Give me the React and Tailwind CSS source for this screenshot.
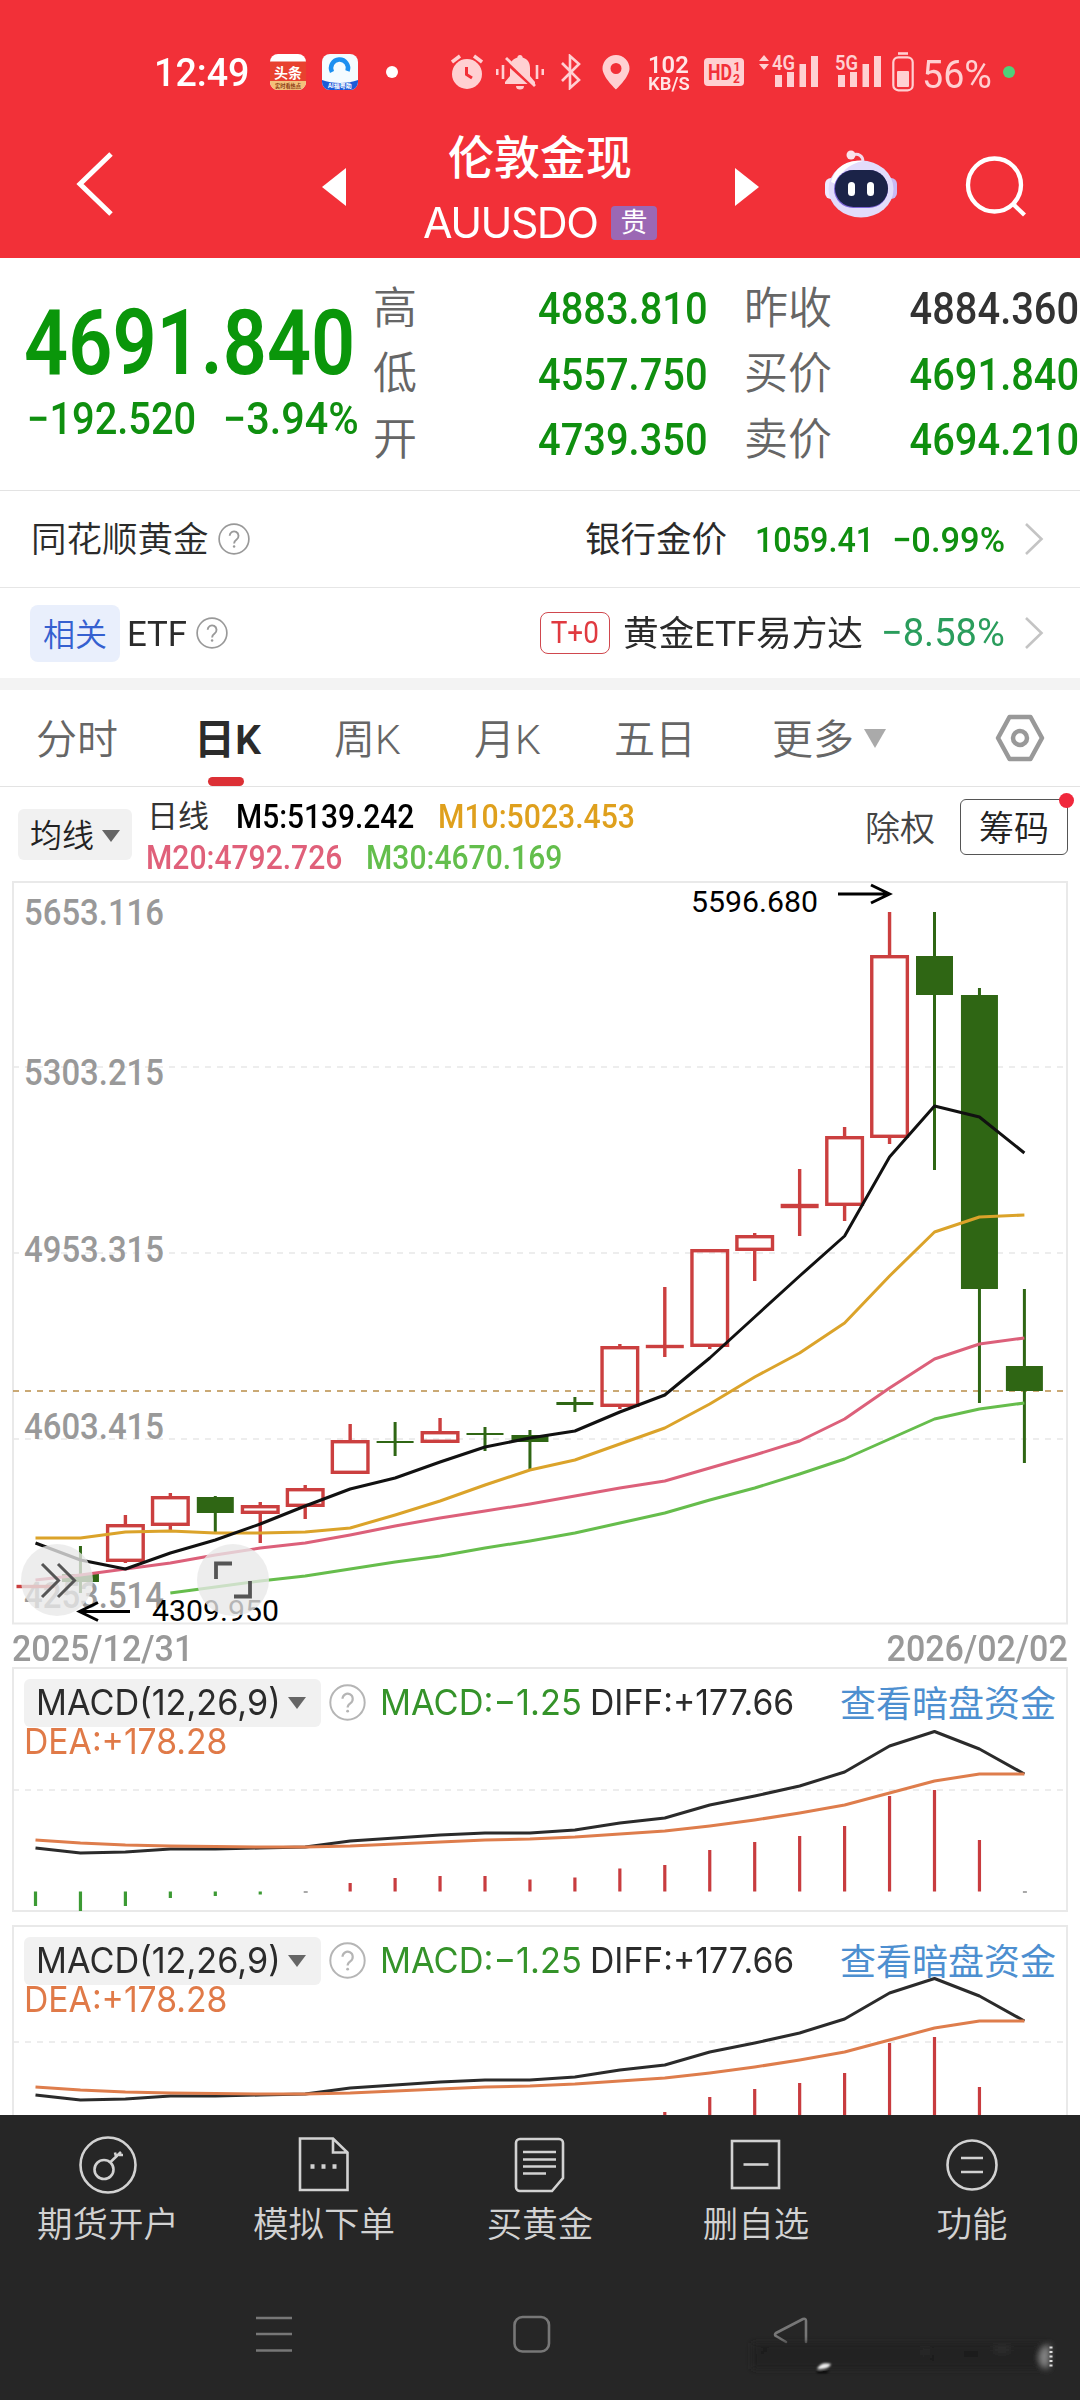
import clsx from 'clsx';

const STEP = 44.95;
const X0 = 35.5;
const cx = (i) => X0 + i * STEP;

// [direction, high, bodyTop, bodyBottom, low] in page pixels
const CANDLES = [
  ['up', 1586, 1585, 1588, 1588],
  ['down', 1546, 1574, 1582, 1593],
  ['up', 1515, 1524, 1562, 1563],
  ['up', 1493, 1496, 1526, 1530],
  ['down', 1496, 1497, 1513, 1532],
  ['up', 1502, 1505, 1514, 1543],
  ['up', 1485, 1488, 1507, 1519],
  ['up', 1424, 1440, 1474, 1474],
  ['down', 1422, 1441, 1443, 1456],
  ['up', 1418, 1431, 1443, 1443],
  ['down', 1427, 1433, 1435, 1451],
  ['down', 1430, 1435, 1442, 1470],
  ['down', 1397, 1402, 1405, 1412],
  ['up', 1344, 1346, 1407, 1409],
  ['up', 1287, 1345, 1348, 1357],
  ['up', 1249, 1249, 1347, 1349],
  ['up', 1233, 1235, 1251, 1281],
  ['up', 1169, 1204, 1208, 1236],
  ['up', 1127, 1136, 1206, 1221],
  ['up', 912, 955, 1138, 1144],
  ['down', 912, 956, 995, 1170],
  ['down', 988, 995, 1289, 1403],
  ['down', 1289, 1366, 1391, 1463],
];

const MA5 = [1543, 1560, 1569, 1553, 1540, 1524, 1506, 1489, 1478, 1462, 1447, 1438, 1431, 1412, 1395, 1358, 1317, 1276, 1236, 1157, 1106, 1117, 1153];
const MA10 = [1538, 1538, 1532, 1531, 1533, 1533, 1532, 1528, 1515, 1501, 1485, 1470, 1460, 1444, 1428, 1404, 1377, 1353, 1323, 1276, 1232, 1217, 1215];
const MA20 = [1580, 1575, 1569, 1563, 1555, 1548, 1543, 1535, 1526, 1518, 1511, 1504, 1496, 1488, 1481, 1468, 1455, 1441, 1419, 1388, 1359, 1344, 1338];
const MA30 = [1593, 1587, 1581, 1576, 1569, 1562, 1556, 1548, 1541, 1533, 1523, 1513, 1500, 1488, 1474, 1459, 1439, 1419, 1409, 1403];

// offsets from the top of the first MACD panel
const DIFF = [181, 186, 185, 182, 182, 181, 180, 174, 171, 168, 166, 166, 163, 156, 151, 138, 129, 119, 105, 79, 64.5, 82, 107];
const DEA = [173, 176, 178, 179, 179.5, 180, 180, 179, 177, 175, 173, 172, 170, 167, 164, 159, 153, 146, 138, 126, 114, 107, 107];
const BARS = [239, 244, 239, 231, 229, 227.5, 225, 216, 211, 209, 209, 212.5, 210.5, 201.5, 198, 183, 175, 169, 159, 129, 123, 173, 225];

const points = (values, start = 0, dy = 0) =>
  values.map((y, i) => `${cx(i + start)},${y + dy}`).join(' ');

// text squeezed horizontally inside a box of known width
function Fit({ box, scale, right, children }) {
  return (
    <span className={clsx('flex shrink-0 whitespace-nowrap', right && 'justify-end', box)}>
      <span className={clsx('inline-block', right ? 'origin-right' : 'origin-left', scale)}>{children}</span>
    </span>
  );
}

function Help({ className }) {
  return (
    <svg viewBox="0 0 34 34" className={className} fill="none" stroke="currentColor">
      <circle cx="17" cy="17" r="15.8" strokeWidth="1.8" />
      <path d="M12.4 13.6a4.7 4.7 0 1 1 7.4 3.9c-2 1.4-2.7 2-2.7 4.2" strokeWidth="2" />
      <circle cx="17.1" cy="25" r="1.3" fill="currentColor" stroke="none" />
    </svg>
  );
}

function Chevron() {
  return (
    <svg viewBox="0 0 20 34" className="h-[34px] w-5 shrink-0" fill="none" stroke="#c4c4c4" strokeWidth="2.6">
      <path d="M2 2 17.500 17 2 32" />
    </svg>
  );
}

function Signal({ label, arrows }) {
  return (
    <svg viewBox="0 0 60 36" className="h-9 w-[60px] shrink-0 overflow-visible" fill="#ffd0d2">
      {arrows && <path d="M0 7 5 1l5 6zM0 10l5 6 5-6z" />}
      <text x="13" y="15.500" fontFamily="Roboto" fontWeight="600" fontSize="20" textLength="23" lengthAdjust="spacingAndGlyphs">{label}</text>
      <rect x="16" y="21" width="7" height="12" />
      <rect x="28" y="18" width="7" height="15" />
      <rect x="40.500" y="10" width="6.500" height="23" />
      <rect x="52" y="2" width="7" height="31" />
    </svg>
  );
}

function StatusBar() {
  return (
    <div className="flex h-[144px] items-center text-[#ffd0d2]">
      <div className="ml-[154px] w-[116px] pt-[2px] text-[38px] font-medium leading-none text-white">
        <Fit box="w-[100px]" scale="scale-x-[0.99]">12:49</Fit>
      </div>
      <svg viewBox="0 0 36 36" className="h-9 w-9">
        <rect width="36" height="36" rx="8" fill="#fff" />
        <path d="M0 7.500h36V28H0z" fill="#e8412f" />
        <path d="M0 27h36v1a8 8 0 0 1-8 8H8a8 8 0 0 1-8-8z" fill="#f3c07a" />
        <text x="4" y="23.500" fontFamily="Noto Sans CJK SC" fontWeight="700" fontSize="14" fill="#fff">头条</text>
        <text x="5" y="33.500" fontFamily="Noto Sans CJK SC" fontWeight="700" fontSize="5.200" fill="#8a3a12">实时看热点</text>
      </svg>
      <svg viewBox="0 0 36 36" className="ml-4 h-9 w-9">
        <rect width="36" height="36" rx="8" fill="#f4fbff" />
        <path d="M0 26c10 4 26 4 36 0v2a8 8 0 0 1-8 8H8a8 8 0 0 1-8-8z" fill="#1c5bd8" />
        <path d="M10 18a8.500 8.500 0 1 1 15.500-1" fill="none" stroke="#1d8ff0" strokeWidth="4.500" />
        <text x="6" y="33.500" fontFamily="Noto Sans CJK SC" fontWeight="700" fontSize="6" fill="#fff">AI福粤助</text>
      </svg>
      <span className="ml-7 h-3 w-3 rounded-full bg-white" />
      <svg viewBox="0 0 32 36" className="ml-[53px] h-9 w-8" fill="none" stroke="#ffd0d2">
        <circle cx="16" cy="20" r="15" fill="#ffd0d2" stroke="none" />
        <path d="M1 8 9 2M31 8l-8-6" strokeWidth="3.500" />
        <path d="M15.500 13v7.500l5.500 3.500" stroke="#f23038" strokeWidth="3" />
      </svg>
      <svg viewBox="0 0 48 36" className="ml-[13px] h-9 w-12" fill="none" stroke="#ffd0d2">
        <path d="M24 1c1.600 0 2.600 1 2.600 2.600C31.600 5 34 9 34 14v8l5 6v2H9v-2l5-6v-8c0-5 2.400-9 7.400-10.400C21.400 2 22.400 1 24 1z" fill="#ffd0d2" stroke="none" />
        <path d="M20 32h8a4 3.500 0 0 1-8 0z" fill="#ffd0d2" stroke="none" />
        <path d="M8 6l31 28" stroke="#f23038" strokeWidth="4" />
        <path d="M10 4l29 28" strokeWidth="2.800" />
        <path d="M1.200 15v6M46.800 15v6M7 11v14M41 11v14" strokeWidth="2.600" />
      </svg>
      <svg viewBox="0 0 22 36" className="ml-4 h-9 w-[22px]" fill="none" stroke="#ffd0d2" strokeWidth="2.600">
        <path d="M2 9l17 17-9 8V2l9 8L2 27" />
      </svg>
      <svg viewBox="0 0 28 36" className="ml-5 h-9 w-7">
        <path fillRule="evenodd" d="M14 1a13.500 13.500 0 0 1 13.500 13.500C27.500 23 14 35.500 14 35.500S.5 23 .5 14.500A13.500 13.500 0 0 1 14 1zm0 8a5.500 5.500 0 1 0 0 11 5.500 5.500 0 0 0 0-11z" fill="#ffd0d2" />
      </svg>
      <div className="ml-[18px] w-[56px] pt-[3px] font-semibold text-[#ffe6e6]">
        <div className="h-5 text-[24px] leading-5"><Fit box="w-[40px]" scale="scale-x-[0.99]">102</Fit></div>
        <div className="h-[18px] text-[19px] leading-[18px]"><Fit box="w-[42px]" scale="scale-x-[0.97]">KB/S</Fit></div>
      </div>
      <svg viewBox="0 0 40 30" className="h-[30px] w-10">
        <rect y="1" width="40" height="28" rx="4" fill="#ffd0d2" />
        <text x="4" y="23" fontFamily="Roboto" fontWeight="700" fontSize="22" textLength="24" lengthAdjust="spacingAndGlyphs" fill="#f23038">HD</text>
        <text x="29.500" y="14" fontFamily="Roboto" fontWeight="700" fontSize="12" fill="#f23038">1</text>
        <text x="29" y="26" fontFamily="Roboto" fontWeight="700" fontSize="12" fill="#f23038">2</text>
      </svg>
      <div className="ml-[15px] flex">
        <Signal label="4G" arrows />
        <div className="ml-[3px]"><Signal label="5G" /></div>
      </div>
      <svg viewBox="0 0 22 40" className="ml-[10px] h-10 w-[22px]" fill="none" stroke="#ffd0d2">
        <rect x="1.300" y="5.300" width="19.400" height="33" rx="5" strokeWidth="2.200" />
        <path d="M6 1.500h10" strokeWidth="2.600" />
        <rect x="5" y="19" width="12" height="16" rx="1" fill="#ffd0d2" stroke="none" />
      </svg>
      <div className="ml-2 w-[72px] pt-[6px] text-[38px] leading-none"><Fit box="w-[70px]" scale="scale-x-[0.99]">56%</Fit></div>
      <span className="ml-[9px] h-3 w-3 rounded-full bg-[#4fd07a]" />
    </div>
  );
}

function Robot() {
  return (
    <svg viewBox="0 0 72 68" className="h-[68px] w-[72px]">
      <path d="M27 5c7-2 11 1 11 7" fill="none" stroke="#f4d9ea" strokeWidth="3" />
      <circle cx="26" cy="5" r="4.500" fill="#fbe3ec" />
      <rect x="0" y="28" width="12" height="21" rx="6" fill="#efeaff" />
      <rect x="60" y="28" width="12" height="21" rx="6" fill="#c9b9f4" />
      <ellipse cx="36" cy="39" rx="32.500" ry="28.500" fill="#e2dcfb" />
      <path d="M6 32C12 12 28 10 38 11c-14 3-24 11-25 24z" fill="#fff" />
      <rect x="9" y="20" width="54" height="38" rx="19" fill="#7d63d8" />
      <rect x="10" y="20" width="53" height="37" rx="18.500" fill="#1b2348" />
      <rect x="23" y="32" width="7" height="14" rx="3.500" fill="#fff" />
      <rect x="42" y="32" width="7" height="14" rx="3.500" fill="#fff" />
    </svg>
  );
}

function Header() {
  return (
    <header className="h-[258px] shrink-0 bg-[#f23038] text-white">
      <StatusBar />
      <div className="flex h-[114px]">
        <svg viewBox="0 0 40 66" className="ml-[76px] mt-[7px] h-[66px] w-10" fill="none" stroke="#fff" strokeWidth="5">
          <path d="M35 3 4 33l31 30" />
        </svg>
        <svg viewBox="0 0 24 38" className="ml-[206px] mt-6 h-[38px] w-6" fill="#fff"><path d="M24 0v38L0 19z" /></svg>
        <div className="-mt-3 ml-[58px] flex w-[272px] flex-col items-center">
          <div className="text-[46px] font-medium leading-[52px]">伦敦金现</div>
          <div className="mt-[15px] flex items-center">
            <Fit box="w-[176px]" scale="scale-x-[1.02]"><span className="font-[family-name:Inter] text-[42px] leading-[48px] tracking-[-1.500px]">AUUSDO</span></Fit>
            <span className="ml-3 flex h-[34px] w-[46px] items-center justify-center rounded bg-[#9b68b4] text-[27px] leading-none">贵</span>
          </div>
        </div>
        <svg viewBox="0 0 24 38" className="ml-[59px] mt-6 h-[38px] w-6" fill="#fff"><path d="M0 0v38l24-19z" /></svg>
        <div className="ml-[66px] mt-[6px]"><Robot /></div>
        <svg viewBox="0 0 64 64" className="ml-[67px] mt-[11px] h-16 w-16" fill="none" stroke="#fff" strokeWidth="4.300">
          <circle cx="30.500" cy="30" r="26.500" />
          <path d="M49 49l11.500 11" />
        </svg>
      </div>
    </header>
  );
}

const QUOTES = [
  ['高', '4883.810', '昨收', '4884.360', 'text-[#333]'],
  ['低', '4557.750', '买价', '4691.840', 'text-[#0f8f0f]'],
  ['开', '4739.350', '卖价', '4694.210', 'text-[#0f8f0f]'],
];

function Quote() {
  return (
    <section className="flex h-[233px] shrink-0 border-b border-[#e3e3e3] text-[#0f8f0f]">
      <div className="ml-6 w-[349px]">
        <div className="mt-[40px] h-[91px] text-[91px] font-semibold leading-[91px] text-[#0a960a]">
          <Fit box="w-[332px]" scale="scale-x-[0.85]">4691.840</Fit>
        </div>
        <div className="ml-[3px] mt-[8px] flex text-[44px] font-medium leading-[44px]">
          <Fit box="w-[196px]" scale="scale-x-[0.905]">−192.520</Fit>
          <Fit box="w-[140px]" scale="scale-x-[0.94]">−3.94%</Fit>
        </div>
      </div>
      <div className="mt-[18px] flex-1">
        {QUOTES.map(([a, av, b, bv, tone]) => (
          <div key={a} className="flex h-[65.500px] items-center text-[45px] font-medium">
            <span className="w-[163px] text-[44px] font-[350] text-[#666]">{a}</span>
            <Fit box="w-[172px]" right scale="scale-x-[0.885]">{av}</Fit>
            <span className="ml-[36px] w-[124px] text-[44px] font-[350] text-[#666]">{b}</span>
            <span className={tone}><Fit box="w-[212px]" scale="scale-x-[0.885]"><span className="pl-[47px]">{bv}</span></Fit></span>
          </div>
        ))}
      </div>
    </section>
  );
}

function LinkRows() {
  return (
    <section className="shrink-0 text-[35.500px] text-[#2b2b2b]">
      <div className="flex h-[97px] items-center border-b border-[#e6e6e6] pl-[31px]">
        <span className="pt-[4px] font-[350]">同花顺黄金</span>
        <Help className="ml-[9px] h-8 w-8 text-[#999]" />
        <span className="ml-auto pt-[4px]">银行金价</span>
        <span className="ml-[28px] flex pt-[4px] font-medium text-[#0f8f0f]">
          <Fit box="w-[137px]" scale="scale-x-[0.91]">1059.41</Fit>
          <Fit box="w-[132px]" scale="scale-x-[0.97]">−0.99%</Fit>
        </span>
        <Chevron />
        <span className="w-[36px]" />
      </div>
      <div className="flex h-[90px] items-center pl-[30px]">
        <span className="flex h-[57px] w-[90px] items-center justify-center rounded-lg bg-[#e9effc] pt-[3px] text-[32px] font-[350] text-[#3560d0]">相关</span>
        <Fit box="ml-[7px] w-[62px] pt-[3px]" scale="scale-x-[0.98]">ETF</Fit>
        <Help className="ml-[7px] h-8 w-8 text-[#999]" />
        <span className="ml-auto flex h-[42px] w-[70px] items-center justify-center rounded-lg border-[1.500px] border-[#d0484e] text-[31px] text-[#e03a40]">
          <span className="scale-x-[0.9]">T+0</span>
        </span>
        <Fit box="ml-[13px] w-[258px] pt-[4px]" scale="scale-x-[1.005]">黄金ETF易方达</Fit>
        <Fit box="w-[143px] text-[39px] text-[#2a9d5c]" scale="scale-x-[0.975]">−8.58%</Fit>
        <Chevron />
        <span className="w-[36px]" />
      </div>
      <div className="h-3 bg-[#f3f3f3]" />
    </section>
  );
}

const TABS = [
  ['分时', 'w-[158px]'],
  ['日K', 'w-[140px]'],
  ['周K', 'w-[140px]'],
  ['月K', 'w-[140px]'],
  ['五日', 'w-[158px]'],
];

function Tabs() {
  return (
    <nav className="relative flex h-[97px] shrink-0 items-center border-b border-[#e3e3e3] pl-9 text-[41px] text-[#666]">
      {TABS.map(([name, width]) => (
        <span key={name} className={clsx(width, 'pt-[5px]', name === '日K' ? 'font-semibold text-[#2b2b2b]' : 'font-[350]')}>{name}</span>
      ))}
      <span className="pt-[5px] font-[350]">更多</span>
      <svg viewBox="0 0 22 19" className="ml-[10px] h-[19px] w-[22px]" fill="#aaa"><path d="M0 0h22L11 19z" /></svg>
      <svg viewBox="0 0 50 48" className="ml-[109px] h-12 w-[50px]" fill="none" stroke="#999" strokeWidth="4.500" strokeLinejoin="round">
        <path d="M14.500 3h21L47 24 35.500 45h-21L3 24z" />
        <circle cx="25" cy="24" r="7" />
      </svg>
      <span className="absolute bottom-0 left-[208px] h-[9px] w-9 rounded-full bg-[#dc3035]" />
    </nav>
  );
}

function Caret() {
  return <svg viewBox="0 0 18 12" className="h-3 w-[18px]" fill="#666"><path d="M0 0h18L9 12z" /></svg>;
}

function MaLegend() {
  return (
    <div className="flex h-[93px] shrink-0">
      <div className="ml-[18px] mt-[22px] flex h-[51px] w-[114px] items-center justify-center gap-2 rounded-md bg-[#f1f1f1] pt-[2px] text-[32px] font-[350] text-[#222]">
        均线 <Caret />
      </div>
      <div className="ml-[14px] mt-[10px] w-[715px] text-[32.500px] font-medium">
        <div className="flex h-[41px] items-center">
          <span className="ml-[1px] w-[89px] text-[31px] font-normal text-[#333]">日线</span>
          <Fit box="w-[202px] text-black" scale="scale-x-[0.92]">M5:5139.242</Fit>
          <Fit box="w-[200px] text-[#dfa01d]" scale="scale-x-[0.928]">M10:5023.453</Fit>
        </div>
        <div className="flex h-[41px] items-center">
          <Fit box="w-[220px] text-[#e0607a]" scale="scale-x-[0.925]">M20:4792.726</Fit>
          <Fit box="w-[200px] text-[#63be4c]" scale="scale-x-[0.925]">M30:4670.169</Fit>
        </div>
      </div>
      <div className="mt-[12px] flex h-[56px] items-center text-[35px] font-[350] text-[#444]">
        <span className="ml-[4px] w-[95px] pt-[6px]">除权</span>
        <span className="relative flex h-[56px] w-[108px] items-center justify-center rounded-md border border-[#555] pt-[6px] text-[#222]">
          筹码
          <i className="absolute -right-[7px] -top-[7px] h-[15px] w-[15px] rounded-full bg-[#f0283c]" />
        </span>
      </div>
    </div>
  );
}

const AXIS = [
  ['5653.116', 924.5],
  ['5303.215', 1084.5],
  ['4953.315', 1262],
  ['4603.415', 1438.5],
  ['4253.514', 1607.5],
];

function Candle({ i, dir, high, top, bottom, low }) {
  const x = cx(i);
  if (dir === 'down') {
    return (
      <g fill="#2f6614">
        <rect x={x - 1.5} y={high} width="3" height={low - high} />
        <rect x={x - 18.5} y={top} width="37" height={bottom - top} />
      </g>
    );
  }
  const flat = bottom - top < 5;
  return (
    <g fill="#cb3f3f">
      <rect x={x - 1.7} y={high} width="3.4" height={Math.max(0, top - high)} />
      <rect x={x - 1.7} y={bottom} width="3.4" height={low - bottom} />
      {flat
        ? <rect x={x - 19} y={top - 0.2} width="38" height={bottom - top + 0.4} />
        : <rect x={x - 17.8} y={top + 1.7} width="35.600" height={bottom - top - 3.4} fill="none" stroke="#cb3f3f" strokeWidth="3.4" />}
    </g>
  );
}

function KLine() {
  return (
    <svg viewBox="0 880 1080 744" className="h-[744px] w-[1080px] shrink-0 overflow-visible" fill="none">
      <rect x="13" y="882" width="1054" height="741.500" stroke="#e9e9e9" strokeWidth="2" />
      <path d="M13 1067h1054M13 1253h1054M13 1439h1054" stroke="#e8e8e8" strokeWidth="1.500" strokeDasharray="6 6" />
      <path d="M13 1391h1054" stroke="#b98d48" strokeWidth="1.600" strokeDasharray="6 6" />
      <g fill="#999" fontFamily="Roboto" fontWeight="500" fontSize="37">
        {AXIS.map(([label, y]) => (
          <text key={label} x="24" y={y} textLength="140" lengthAdjust="spacingAndGlyphs">{label}</text>
        ))}
      </g>
      {CANDLES.map(([dir, high, top, bottom, low], i) => (
        <Candle key={i} i={i} dir={dir} high={high} top={top} bottom={bottom} low={low} />
      ))}
      <g strokeWidth="3" strokeLinejoin="round">
        <polyline points={points(MA30, 3)} stroke="#66bd4c" />
        <polyline points={points(MA20)} stroke="#dc607a" />
        <polyline points={points(MA10)} stroke="#dba32a" />
        <polyline points={points(MA5)} stroke="#111" />
      </g>
      <g fill="#000" fontFamily="Roboto" fontSize="29.500">
        <text x="691" y="912" textLength="127" lengthAdjust="spacingAndGlyphs">5596.680</text>
        <text x="152" y="1620.500" textLength="127" lengthAdjust="spacingAndGlyphs">4309.950</text>
      </g>
      <path d="M838 894h51M871 885l18.500 9-18.500 9M130 1611.500H80M98 1602.500l-18.500 9 18.500 9" stroke="#000" strokeWidth="3" />
      <g fill="#e8e8e8" fillOpacity=".78">
        <circle cx="57" cy="1580" r="36" />
        <circle cx="233" cy="1580" r="36" />
      </g>
      <path d="M42 1564l16.500 16.500L42 1597M58 1564l16.500 16.500L58 1597" stroke="#555" strokeWidth="3" />
      <path d="M216 1579v-15.500h16M234 1596.500h16V1581" stroke="#555" strokeWidth="3.800" />
    </svg>
  );
}

function Macd({ tall, dy, grid }) {
  return (
    <section className="relative h-[245px] shrink-0">
      <svg viewBox="0 0 1080 245" className="absolute inset-0 h-[245px] w-[1080px]" fill="none">
        <rect x="13" y="1" width="1054" height={tall ? 300 : 243} stroke="#e9e9e9" strokeWidth="2" />
        <path d={`M13 ${grid}h1054`} stroke="#e8e8e8" strokeWidth="1.500" strokeDasharray="6 6" />
        {BARS.map((y, i) => {
          const base = 224.5;
          if (Math.abs(y - base) < 1) return <rect key={i} x={cx(i) - 1.5} y={base + dy} width="4" height="1" fill="#555" />;
          return (
            <rect
              key={i}
              x={cx(i) - 1.6}
              y={Math.min(y, base) + dy}
              width="3.200"
              height={Math.abs(y - base)}
              fill={y > base ? '#3c9a34' : '#c83c3f'}
            />
          );
        })}
        <g strokeWidth="3" strokeLinejoin="round">
          <polyline points={points(DIFF, 0, dy)} stroke="#2b2b2b" />
          <polyline points={points(DEA, 0, dy)} stroke="#de7d4c" />
        </g>
      </svg>
      <div className="relative flex h-[48px] items-center font-[family-name:Inter] text-[35.500px] text-[#2b2b2b]">
        <div className="ml-6 mt-[23px] flex h-[48px] w-[297px] shrink-0 items-center rounded-md bg-[#f1f1f1] pl-3">
          <Fit box="w-[252px]" scale="scale-x-[0.965]">MACD(12,26,9)</Fit>
          <Caret />
        </div>
        <Help className="ml-2 mt-[23px] h-[37px] w-[37px] shrink-0 text-[#b5b5b5]" />
        <div className="mt-[23px] flex flex-1 items-center">
          <Fit box="ml-[14px] w-[210px] text-[#35932a]" scale="scale-x-[0.968]">MACD:−1.25</Fit>
          <Fit box="w-[250px]" scale="scale-x-[0.95]">DIFF:+177.66</Fit>
          <span className="-mt-[3px] font-['Noto_Sans_CJK_SC'] text-[36px] leading-none text-[#4d8fd0]">查看暗盘资金</span>
        </div>
      </div>
      <div className="relative ml-6 mt-[6px] font-[family-name:Inter] text-[35.500px] leading-[42px] text-[#e07a48]">
        <Fit box="w-[204px]" scale="scale-x-[0.95]">DEA:+178.28</Fit>
      </div>
    </section>
  );
}

const ACTIONS = [
  ['期货开户', (
    <g key="a">
      <circle cx="30" cy="30" r="27.500" />
      <circle cx="26" cy="34.500" r="9.500" />
      <path d="M32 27.500 43 17M38 21.500l-1-4M41 20h4" />
    </g>
  )],
  ['模拟下单', (
    <g key="b">
      <path d="M6 4.500h33l14.500 14V56H6zM39 4.500V18.500h14.500" transform="translate(0 -1)" />
      <path d="M16.500 31.500h4M27.500 31.500h4M38.500 31.500h4" strokeWidth="4.500" />
    </g>
  )],
  ['买黄金', (
    <g key="c">
      <path d="M10 4h39a4 4 0 0 1 4 4v35L42 56H10a4 4 0 0 1-4-4V8a4 4 0 0 1 4-4z" />
      <path d="M13 17h33M13 24.500h33M13 31.500h33M13 38.500h23" />
    </g>
  )],
  ['删自选', (
    <g key="d">
      <rect x="6" y="6" width="47" height="47" />
      <path d="M17.500 29.500h25" />
    </g>
  )],
  ['功能', (
    <g key="e">
      <circle cx="30" cy="30" r="24.500" />
      <path d="M19 23h22M19 37h22" />
    </g>
  )],
];

function BottomBar() {
  return (
    <footer className="flex h-[285px] shrink-0 flex-col bg-[#262626] text-[#d2d2d2]">
      <div className="flex h-[180px] w-[1080px] pt-5">
        {ACTIONS.map(([label, icon]) => (
          <div key={label} className="flex w-[216px] flex-col items-center">
            <svg viewBox="0 0 60 60" className="h-[60px] w-[60px]" fill="none" stroke="currentColor" strokeWidth="2.600">{icon}</svg>
            <span className="mt-[4px] text-[35.500px] font-[350] leading-[52px]">{label}</span>
          </div>
        ))}
      </div>
      <div className="relative flex h-[105px] items-start pl-[256px] pt-[20px]">
        <svg viewBox="0 0 36 38" className="h-[38px] w-9" stroke="#777" strokeWidth="2.600"><path d="M0 3h36M0 19h36M0 35.500h36" /></svg>
        <svg viewBox="0 0 38 38" className="ml-[221px] h-[38px] w-[38px]" fill="none" stroke="#777" strokeWidth="2.600"><rect x="1.500" y="2" width="34.500" height="34.500" rx="8" /></svg>
        <svg viewBox="0 0 38 38" className="ml-[221px] h-[38px] w-[38px]" fill="none" stroke="#777" strokeWidth="2.600" strokeLinecap="round" strokeLinejoin="round"><path d="M34 27V6q0-3-3-2L4 18q-2 2 0 3l10 6" /></svg>
        <svg viewBox="0 0 316 44" className="absolute left-[744px] top-[40px] h-11 w-[316px]">
          <defs>
            <filter id="smudge" x="-10%" y="-50%" width="120%" height="200%"><feGaussianBlur stdDeviation="3" /></filter>
            <filter id="speck" x="-50%" y="-50%" width="200%" height="200%"><feGaussianBlur stdDeviation="0.900" /></filter>
          </defs>
          <g filter="url(#smudge)">
            <rect x="8" y="8" width="298" height="26" fill="#232323" />
            <path d="M12 32c2-14 6-20 14-20l-4 6c-5 2-6 8-10 14z" fill="#1a1a1a" />
            <path d="M180 12h10v14h-10zM220 16h14v6h-14z" fill="#1e1e1e" />
            <path d="M250 12h16v5h-16zM180 14h6v6h-6z" fill="#303030" />
            <path d="M306 10c-12 2-14 20-2 24z" fill="#8a8a8a" />
          </g>
          <g filter="url(#speck)">
            <path d="M73 34q4-8 14-5-2 6-14 5z" fill="#eee" />
            <path d="M72 36h14l-4 2h-8z" fill="#000" />
          </g>
          <path d="M307 11.500v22" stroke="#ddd" strokeWidth="3" strokeDasharray="2 2.500" />
        </svg>
      </div>
    </footer>
  );
}

export default function App() {
  return (
    <div className="flex h-[2400px] w-[1080px] flex-col overflow-hidden bg-white font-['Roboto','Noto_Sans_CJK_SC',sans-serif]">
      <Header />
      <Quote />
      <LinkRows />
      <Tabs />
      <MaLegend />
      <KLine />
      <div className="flex h-[43px] shrink-0 items-center justify-between pl-3 pr-[12px] pt-[6px] text-[36px] font-medium text-[#999]">
        <Fit box="w-[180px]" scale="scale-x-[0.945]">2025/12/31</Fit>
        <Fit box="w-[180px]" scale="scale-x-[0.945]" right>2026/02/02</Fit>
      </div>
      <Macd dy={0} grid={123} />
      <div className="h-[13px] shrink-0" />
      <div className="h-[190px] shrink-0 overflow-hidden">
        <Macd tall dy={-11} grid={117} />
      </div>
      <BottomBar />
    </div>
  );
}
